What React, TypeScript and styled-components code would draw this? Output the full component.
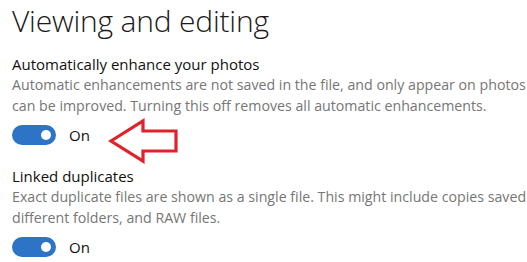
import React from "react";
import styled, { createGlobalStyle } from "styled-components";

const Global = createGlobalStyle`
  html, body { margin: 0; padding: 0; background: #ffffff; }
  body { font-family: "Open Sans", "Noto Sans", "Liberation Sans", sans-serif; overflow: hidden; }
`;

const Page = styled.div`
  position: relative;
  width: 527px;
  height: 262px;
  overflow: hidden;
  padding: 0 0 0 12px;
  box-sizing: border-box;
  background: #fff;
`;

const Heading = styled.h1`
  margin: 0;
  font-size: 30px;
  line-height: 42px;
  font-weight: 300;
  color: #1a1a1a;
  letter-spacing: -0.2px;
`;

const Section = styled.section<{ $top: number }>`
  margin-top: ${(p) => p.$top}px;
  display: flex;
  flex-direction: column;
`;

const Title = styled.div`
  font-size: 15px;
  line-height: 20px;
  color: #111;
  white-space: nowrap;
`;

const Desc = styled.div`
  font-size: 14.2px;
  line-height: 21px;
  color: #767676;
  white-space: nowrap;
`;

const ToggleRow = styled.div`
  display: flex;
  align-items: center;
  gap: 13px;
  margin-top: 9px;
  height: 20px;
`;

const Track = styled.div`
  width: 44px;
  height: 20px;
  border-radius: 10px;
  background: #2e74c6;
  display: flex;
  align-items: center;
  justify-content: flex-end;
  padding-right: 5px;
  box-sizing: border-box;
`;

const Knob = styled.div`
  width: 10px;
  height: 10px;
  border-radius: 50%;
  background: #fff;
`;

const ToggleLabel = styled.span`
  font-size: 15px;
  color: #111;
`;

const Arrow = styled.svg`
  position: absolute;
  left: 106px;
  top: 116px;
`;

function Toggle() {
  return (
    <ToggleRow>
      <Track>
        <Knob />
      </Track>
      <ToggleLabel>On</ToggleLabel>
    </ToggleRow>
  );
}

export default function App() {
  return (
    <>
      <Global />
      <Page>
        <Heading>Viewing and editing</Heading>
        <Section $top={12}>
          <Title>Automatically enhance your photos</Title>
          <Desc>
            Automatic enhancements are not saved in the file, and only appear on photos
            <br />
            can be improved. Turning this off removes all automatic enhancements.
          </Desc>
          <Toggle />
        </Section>
        <Section $top={21}>
          <Title>Linked duplicates</Title>
          <Desc>
            Exact duplicate files are shown as a single file. This might include copies saved
            <br />
            different folders, and RAW files.
          </Desc>
          <Toggle />
        </Section>
        <Arrow width="76" height="50" viewBox="0 0 76 50">
          <path
            d="M5 25 L37 5 L37 15 L70 15 L70 35 L37 35 L37 45 Z"
            fill="#ffffff"
            stroke="#e0222b"
            strokeWidth="3.2"
            strokeLinejoin="miter"
          />
        </Arrow>
      </Page>
    </>
  );
}
